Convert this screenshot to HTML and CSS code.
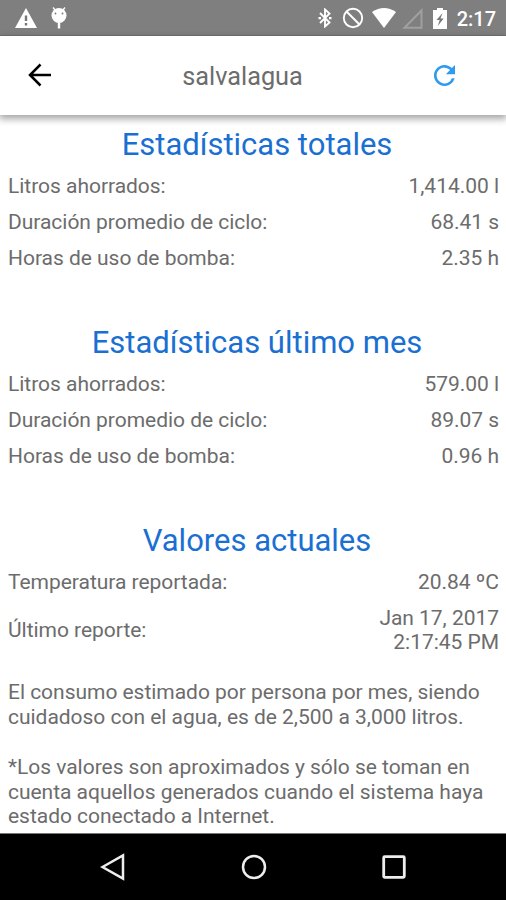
FILE: index.html
```
<!DOCTYPE html>
<html lang="es">
<head>
  <meta charset="UTF-8" />
  <meta name="viewport" content="width=device-width, initial-scale=1" />
  <title>salvalagua</title>
  <link rel="stylesheet" href="styles.css">
</head>
<body>

  <div class="status-bar">
    <svg class="warning" width="22" height="20" viewBox="0 0 22 20">
      <path d="M11 0L22 20H0z" fill="#fff"/>
      <path d="M11 7.500v5.500M11 15v2.500" stroke="#777" stroke-width="2.400"/>
    </svg>
    <svg class="debug" width="16" height="22" viewBox="0 0 16 22">
      <path d="M2 0.500l2.500 3M14 0.500l-2.500 3" stroke="#fff" stroke-width="1.300"/>
      <circle cx="8" cy="8.500" r="7.500" fill="#fff"/>
      <path d="M8 15v6.500" stroke="#fff" stroke-width="2.400"/>
      <circle cx="4.500" cy="6.500" r="0.900" fill="#777"/>
      <circle cx="11.500" cy="6.500" r="0.900" fill="#777"/>
    </svg>
    <div class="status-icons">
      <svg class="bluetooth" width="14" height="20" viewBox="0 0 14 20">
        <path d="M2 5l9.500 9.500L7 18.500v-17l4.500 4L2 15" fill="none" stroke="#fff" stroke-width="1.900"/>
        <path d="M0.500 9h2.500v2.200H0.500zM11 9h2.500v2.200H11z" fill="#fff"/>
      </svg>
      <svg class="blocked" width="22" height="22" viewBox="0 0 22 22">
        <g fill="none" stroke="#fff" stroke-width="1.900">
          <circle cx="11" cy="11" r="9.200"/>
          <path d="M4.500 4.500l13 13"/>
        </g>
      </svg>
      <svg class="wifi" width="24" height="20" viewBox="0 0 24 20">
        <path d="M0 4Q12-4 24 4L12 20z" fill="#fff"/>
      </svg>
      <svg class="signal" width="21" height="21" viewBox="0 0 21 21">
        <path d="M2.500 19.700L19.500 2.500v17.200z" fill="none" stroke="#a0a0a0" stroke-width="2"/>
      </svg>
      <svg class="battery" width="14" height="21" viewBox="0 0 14 21">
        <path d="M4 0h6v2h4v19H0V2h4z" fill="#fff"/>
        <path d="M9.500 5L3.500 12h3.200l-2 6 6-7.500H7.500z" fill="#777"/>
      </svg>
      <span class="clock">2:17</span>
    </div>
  </div>

  <header class="toolbar">
    <svg class="back" width="24" height="24" viewBox="0 0 24 24">
      <path d="M23 12H2.500M12.500 1.500L2 12l10.500 10.500" fill="none" stroke="#000" stroke-width="2.500"/>
    </svg>
    <h1>salvalagua</h1>
    <svg class="refresh" width="21" height="21" viewBox="0 0 16 16">
      <path fill="#2d9cf0" d="M13.650 2.350A8 8 0 1 0 15.730 10h-2.080A6 6 0 1 1 8 2c1.660 0 3.140.69 4.220 1.780L9 7h7V0z"/>
    </svg>
  </header>

  <main class="content">
    <section>
      <h2>Estadísticas totales</h2>
      <div class="row"><span>Litros ahorrados:</span><span>1,414.00 l</span></div>
      <div class="row"><span>Duración promedio de ciclo:</span><span>68.41 s</span></div>
      <div class="row"><span>Horas de uso de bomba:</span><span>2.35 h</span></div>
    </section>

    <section>
      <h2>Estadísticas último mes</h2>
      <div class="row"><span>Litros ahorrados:</span><span>579.00 l</span></div>
      <div class="row"><span>Duración promedio de ciclo:</span><span>89.07 s</span></div>
      <div class="row"><span>Horas de uso de bomba:</span><span>0.96 h</span></div>
    </section>

    <section>
      <h2>Valores actuales</h2>
      <div class="row"><span>Temperatura reportada:</span><span>20.84 ºC</span></div>
      <div class="row"><span>Último reporte:</span><span class="value">Jan 17, 2017<br>2:17:45 PM</span></div>
    </section>

    <div class="notes">
      <p>El consumo estimado por persona por mes, siendo<br>cuidadoso con el agua, es de 2,500 a 3,000 litros.</p>
      <p>*Los valores son aproximados y sólo se toman en<br>cuenta aquellos generados cuando el sistema haya<br>estado conectado a Internet.</p>
    </div>
  </main>

  <nav class="nav-bar">
    <svg width="26" height="28" viewBox="0 0 26 28">
      <path d="M2.500 14L23 2.500v23z" fill="none" stroke="#eee" stroke-width="2.500"/>
    </svg>
    <svg width="26" height="28" viewBox="0 0 26 28">
      <circle cx="13" cy="14" r="11" fill="none" stroke="#eee" stroke-width="2.500"/>
    </svg>
    <svg width="26" height="28" viewBox="0 0 26 28">
      <rect x="2.700" y="3.700" width="20.600" height="20.600" rx="1" fill="none" stroke="#eee" stroke-width="2.800"/>
    </svg>
  </nav>

</body>
</html>
```
FILE: styles.css
```
* {
  box-sizing: border-box;
}

body {
  font-family: Roboto, sans-serif;
  font-size: 21px;
  letter-spacing: -0.03px;
  color: #6c6c6c;
  margin: 0;
  background: #fff;
  height: 900px;
  display: flex;
  flex-direction: column;
  overflow: hidden;
}

svg {
  display: block;
  flex: none;
}

.status-bar {
  height: 36px;
  flex: none;
  background: #7f7f7f;
  border-bottom: 1px solid #727272;
  display: flex;
  align-items: center;
  padding: 1px 10px 0 15px;
}

.debug {
  margin-left: 14px;
}

.status-icons {
  display: flex;
  align-items: center;
  margin-left: auto;
}

.blocked {
  margin-left: 10px;
}

.wifi {
  margin-left: 8px;
}

.signal {
  margin-left: 6px;
}

.battery {
  margin: 0 10px;
}

.clock {
  font-size: 20px;
  font-weight: 500;
  color: #fff;
  letter-spacing: 0;
  line-height: 32px;
  margin-top: 1px;
}

.toolbar {
  height: 79px;
  flex: none;
  display: flex;
  align-items: center;
  justify-content: space-between;
  padding: 0 51px 1px 28px;
  box-shadow: 0 3px 7px 1px rgba(0, 0, 0, 0.35);
}

.toolbar h1 {
  margin: 3px 1px 0 0;
  font-size: 25.300px;
  font-weight: 400;
  letter-spacing: 0;
}

.content {
  flex: 1;
  min-height: 0;
  padding: 10px 7px 0 8px;
}

section {
  margin-bottom: 47px;
}

section:nth-child(3) {
  margin-bottom: 20px;
}

h2 {
  margin: 0;
  font-size: 31px;
  font-weight: 400;
  line-height: 40px;
  letter-spacing: 0;
  padding: 0 0 3px 7px;
  text-align: center;
  color: #1a6fd2;
}

.row {
  display: flex;
  justify-content: space-between;
  align-items: center;
  min-height: 36px;
  padding: 5.500px 0;
  line-height: 24.700px;
}

.value {
  text-align: right;
}

.notes p {
  margin: 0 0 25px;
  line-height: 24.700px;
  white-space: nowrap;
}

.notes p:last-child {
  margin-bottom: 0;
}

.nav-bar {
  height: 67px;
  flex: none;
  background: #000;
  border-top: 1px solid #777;
  display: flex;
  justify-content: space-between;
  align-items: center;
  padding: 0 99px 0 100px;
}
```
